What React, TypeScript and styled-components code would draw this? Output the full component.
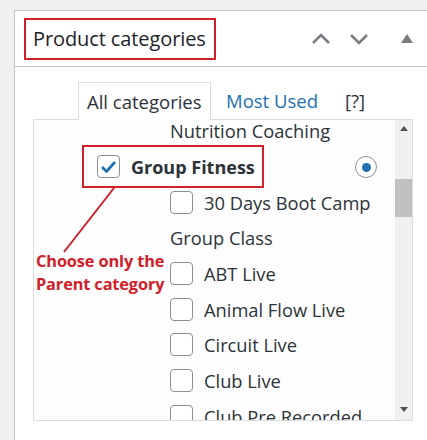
import { Fragment } from "react"
import styled, { createGlobalStyle } from "styled-components"

const GlobalStyle = createGlobalStyle`
    body {
        margin: 0;
        background: #f0f0f1;
        font-family: "Open Sans", "Noto Sans", sans-serif;
        color: #2c3338;
        overflow: hidden;
    }
`

const Page = styled('div')`
    padding: 10px 0 0 14px;
    height: 440px;
    box-sizing: border-box;
`

const Panel = styled('div')`
    position: relative;
    background: #fff;
    border: 1px solid #c3c4c7;
    border-right: none;
    height: 440px;
`

const Header = styled('div')`
    display: flex;
    align-items: center;
    height: 55px;
    border-bottom: 1px solid #c3c4c7;
    padding-left: 9px;
`

const TitleBox = styled('div')`
    width: 192px;
    height: 42px;
    box-sizing: border-box;
    border: 2px solid #d0202a;
    display: flex;
    align-items: center;
    padding-left: 7px;
    font-size: 20px;
    letter-spacing: -0.1px;
    color: #1d2327;
    white-space: nowrap;
`

const Controls = styled('div')`
    display: flex;
    align-items: center;
    margin-left: auto;
    gap: 18px;
    padding-right: 14px;
    color: #787c82;
`

const Body = styled('div')`
    padding: 14px 0 0 18px;
`

const Tabs = styled('div')`
    display: flex;
    align-items: flex-end;
    padding-left: 45px;
    height: 38px;
`

const Tab = styled('div')<{ $active?: boolean; $link?: boolean }>`
    height: 38px;
    box-sizing: border-box;
    display: flex;
    align-items: center;
    font-size: 18.5px;
    white-space: nowrap;
    color: ${p => (p.$link ? "#2271b1" : "#2c3338")};
    ${p => p.$active
        ? `border: 1px solid #dcdcde; border-bottom: none; background: #fff; padding: 0 8px; margin-bottom: -1px; position: relative; z-index: 1; width: 133px;`
        : `padding: 0 0 0 15px;`}
`

const ListBox = styled('div')`
    width: 380px;
    height: 302px;
    box-sizing: border-box;
    border: 1px solid #dcdcde;
    background: #fdfdfd;
    display: flex;
    overflow: hidden;
`

const ListContent = styled('div')`
    flex: 1;
    margin-top: -7px;
`

const Row = styled('div')<{ $indent: number }>`
    height: 35.7px;
    display: flex;
    align-items: center;
    padding-left: ${p => p.$indent}px;
    font-size: 18.3px;
    white-space: nowrap;
`

const ParentBox = styled('div')`
    position: relative;
    margin-left: 48px;
    height: 43px;
    width: 182px;
    box-sizing: border-box;
    border: 2px solid #d0202a;
    display: flex;
    align-items: center;
    padding-left: 13px;
    font-size: 18px;
    font-weight: 700;
    color: #2c3338;
    white-space: nowrap;
`

const ParentRow = styled('div')`
    height: 35.7px;
    display: flex;
    align-items: center;
`

const Check = styled('span')`
    width: 23px;
    height: 23px;
    box-sizing: border-box;
    border: 1px solid #8c8f94;
    border-radius: 4px;
    background: #fff;
    margin-right: 11px;
    flex-shrink: 0;
    display: flex;
    align-items: center;
    justify-content: center;
`

const Radio = styled('span')`
    position: absolute;
    left: 271px;
    top: 9px;
    width: 22px;
    height: 22px;
    box-sizing: border-box;
    border: 1px solid #8c8f94;
    border-radius: 50%;
    background: #fff;
    display: flex;
    align-items: center;
    justify-content: center;

    &::after {
        content: "";
        width: 9px;
        height: 9px;
        border-radius: 50%;
        background: #2271b1;
    }
`

const Scrollbar = styled('div')`
    width: 17px;
    background: #f0f0f0;
    display: flex;
    flex-direction: column;
    align-items: center;
    justify-content: space-between;
    padding: 6px 0 8px;
    position: relative;
`

const Thumb = styled('div')`
    position: absolute;
    top: 59px;
    left: 0;
    width: 17px;
    height: 38px;
    background: #c1c1c1;
`

const Note = styled('div')`
    position: absolute;
    left: 21px;
    top: 239px;
    color: #d0202a;
    font-size: 16.3px;
    font-weight: 700;
    line-height: 23px;
    white-space: nowrap;
    letter-spacing: -0.1px;
`

const Pointer = styled('svg')`
    position: absolute;
    left: 0;
    top: 0;
    pointer-events: none;
`

const Chevron = ({ up }: { up?: boolean }) => (
    <svg width="20" height="12" viewBox="0 0 20 12">
        <path d={up ? "M2 10 L10 2 L18 10" : "M2 2 L10 10 L18 2"} fill="none" stroke="#787c82" strokeWidth="2.6" />
    </svg>
)

const Arrow = ({ up }: { up?: boolean }) => (
    <svg width="8" height="5" viewBox="0 0 8 5">
        <path d={up ? "M0 5 L4 0 L8 5 Z" : "M0 0 L4 5 L8 0 Z"} fill="#505050" />
    </svg>
)

const Tick = () => (
    <svg width="17" height="14" viewBox="0 0 17 14">
        <path d="M2 7 L6.5 11.5 L15 2" fill="none" stroke="#2271b1" strokeWidth="2.8" strokeLinejoin="round" />
    </svg>
)

const App = (): JSX.Element => {

    const items: { label: string; box: boolean }[] = [
        { label: "30 Days Boot Camp", box: true },
        { label: "Group Class", box: false },
        { label: "ABT Live", box: true },
        { label: "Animal Flow Live", box: true },
        { label: "Circuit Live", box: true },
        { label: "Club Live", box: true },
        { label: "Club Pre Recorded", box: true },
    ]

    return (
        <Fragment>
            <GlobalStyle />
            <Page>
                <Panel>
                    <Header>
                        <TitleBox>Product categories</TitleBox>
                        <Controls>
                            <Chevron up />
                            <Chevron />
                            <svg width="12" height="9" viewBox="0 0 12 9" style={{ marginLeft: 14 }}>
                                <path d="M0 9 L6 0 L12 9 Z" fill="#787c82" />
                            </svg>
                        </Controls>
                    </Header>

                    <Body>
                        <Tabs>
                            <Tab $active>All categories</Tab>
                            <Tab $link>Most Used</Tab>
                            <Tab style={{ paddingLeft: 27 }}>[?]</Tab>
                        </Tabs>

                        <ListBox>
                            <ListContent>
                                <Row $indent={136}>Nutrition Coaching</Row>
                                <ParentRow>
                                    <ParentBox>
                                        <Check><Tick /></Check>
                                        Group Fitness
                                        <Radio />
                                    </ParentBox>
                                </ParentRow>
                                {items.map((v, i) => (
                                    <Row key={i} $indent={136}>
                                        {v.box && <Check />}
                                        {v.label}
                                    </Row>
                                ))}
                            </ListContent>
                            <Scrollbar>
                                <Arrow up />
                                <Thumb />
                                <Arrow />
                            </Scrollbar>
                        </ListBox>
                    </Body>

                    <Pointer width="120" height="260">
                        <line x1="99" y1="177" x2="49" y2="241" stroke="#d0202a" strokeWidth="2" />
                    </Pointer>
                    <Note>
                        Choose only the<br />Parent category
                    </Note>
                </Panel>
            </Page>
        </Fragment>
    )
}

export default App
